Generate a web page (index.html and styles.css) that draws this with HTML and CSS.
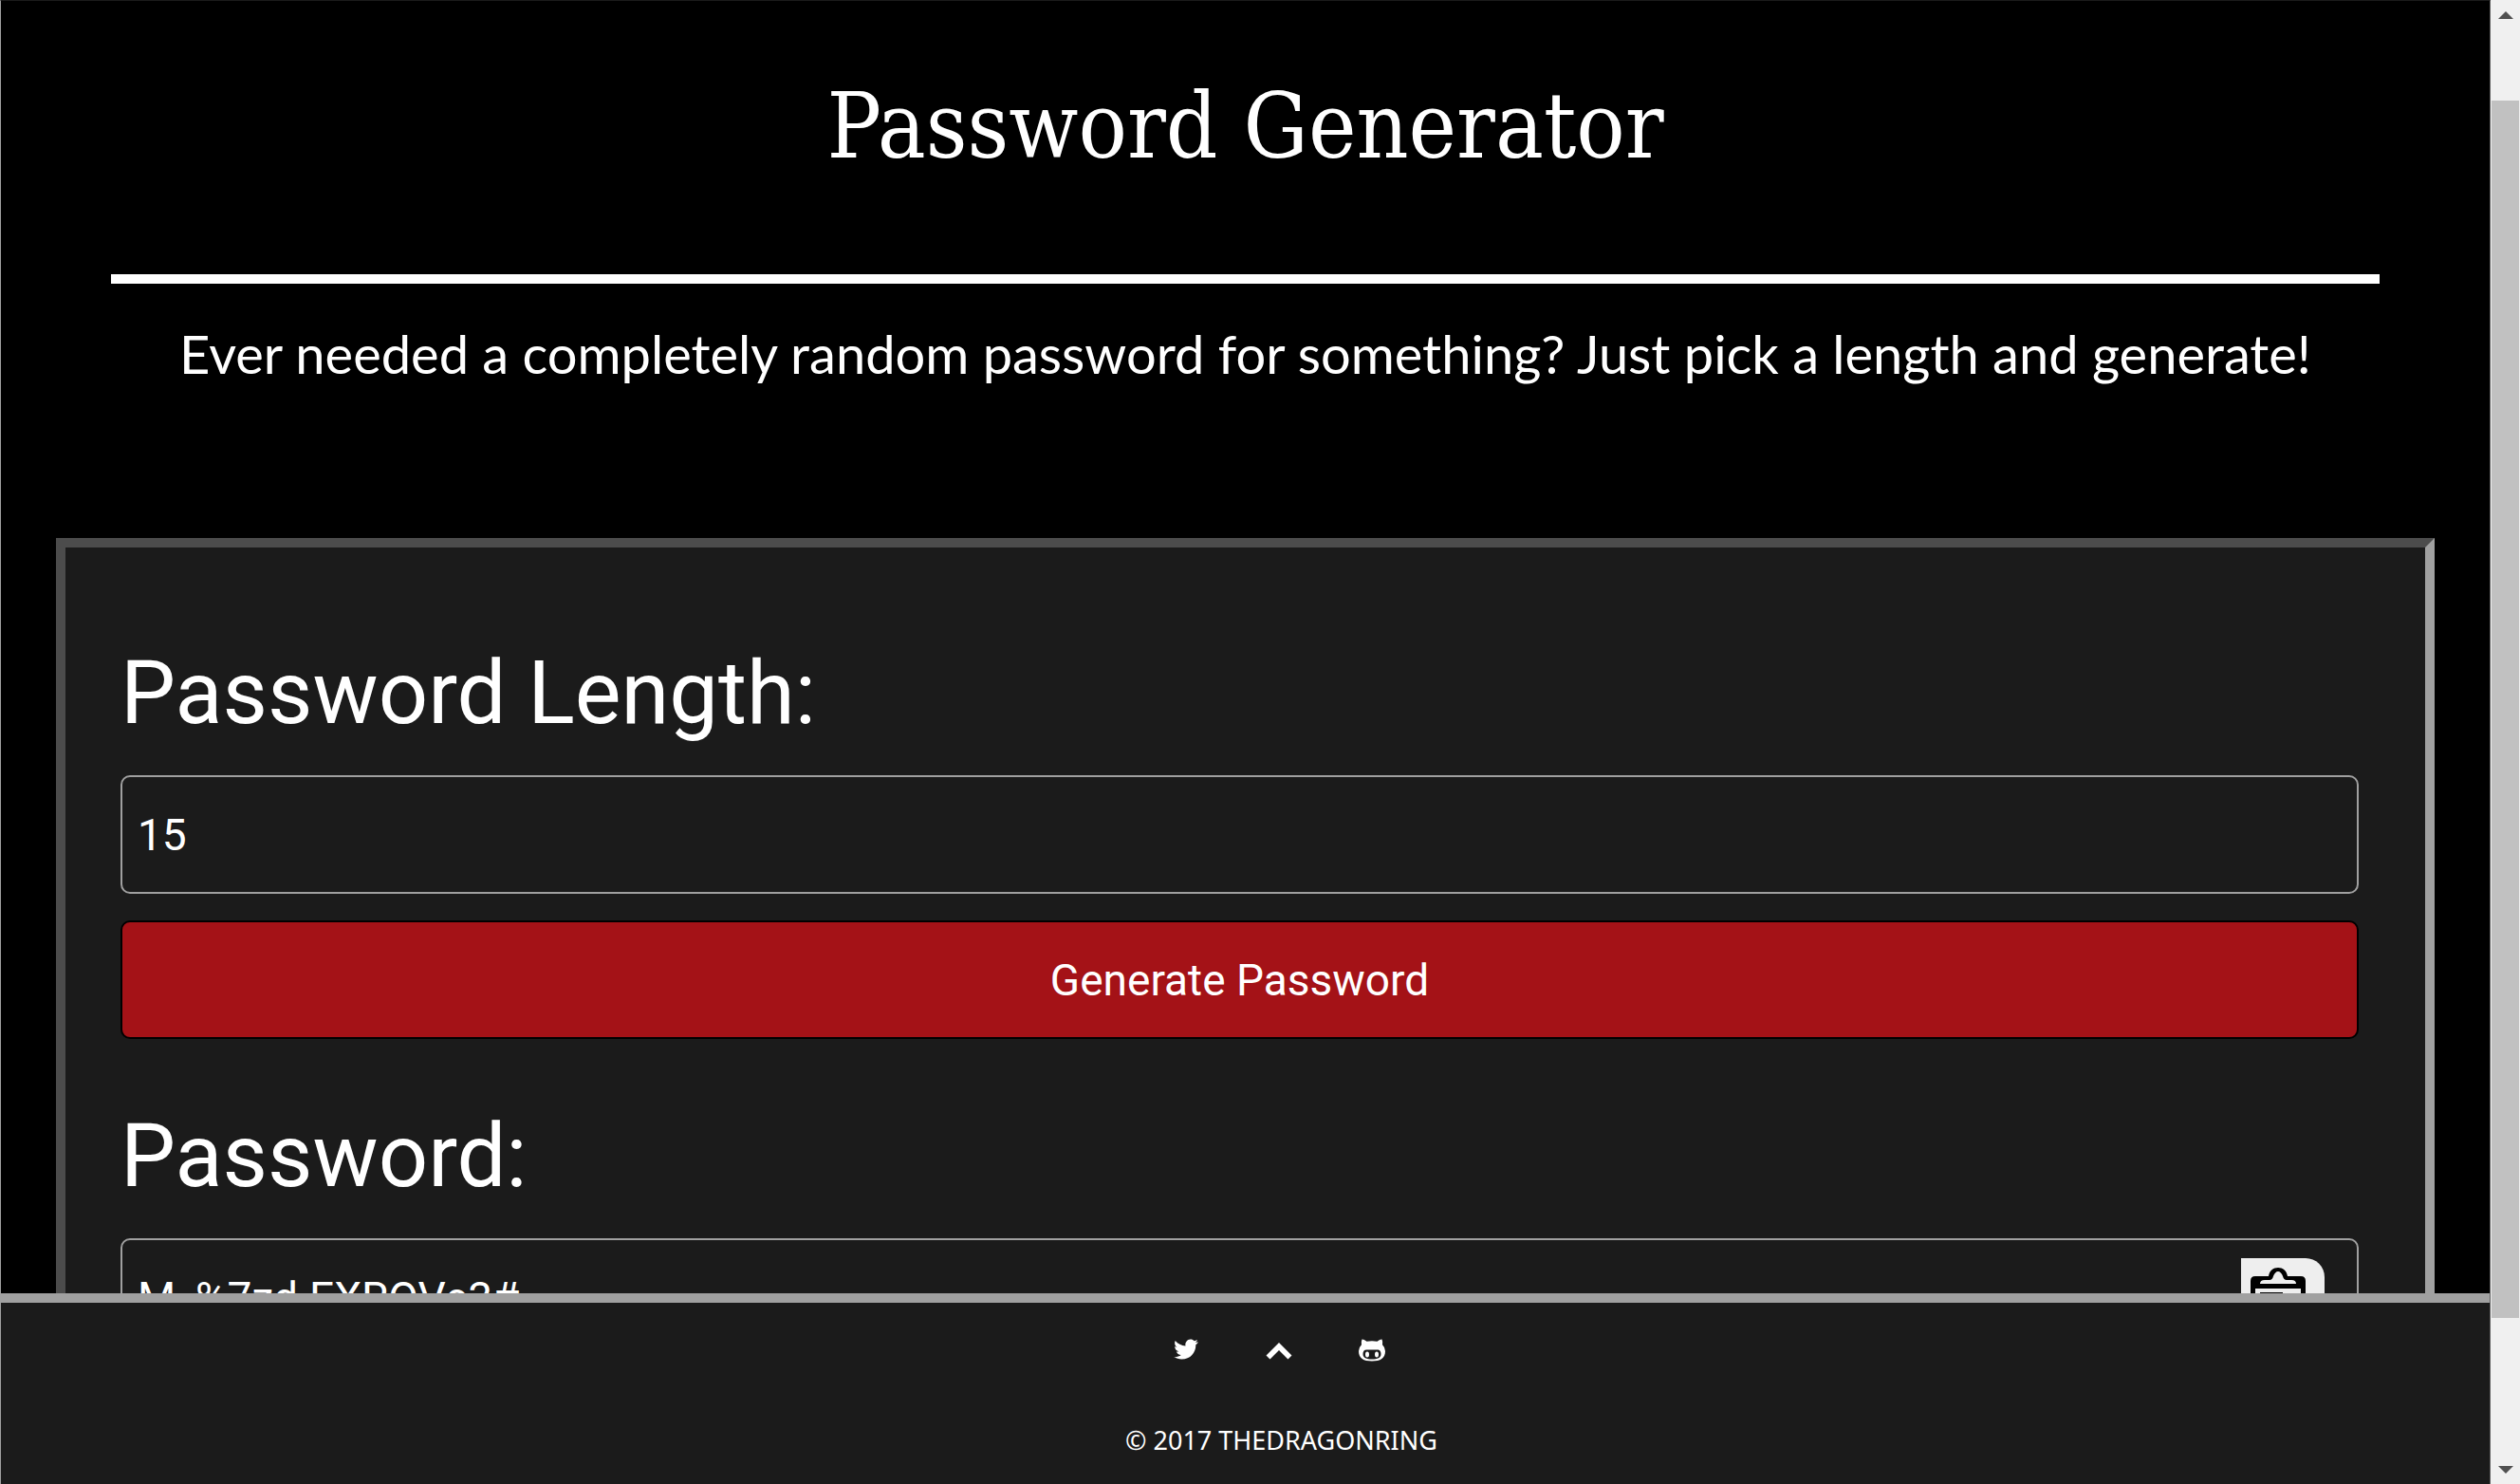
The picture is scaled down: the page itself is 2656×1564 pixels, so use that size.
FILE: index.html
```html
<!DOCTYPE html>
<html lang="en">
<head>
<meta charset="utf-8">
<title>Password Generator</title>
<link rel="stylesheet" href="styles.css">
</head>
<body>
<div class="window">
  <div class="page">
    <main class="content">
      <header class="intro">
        <h1 class="title">Password Generator</h1>
        <hr class="rule">
        <p class="tagline">Ever needed a completely random password for something? Just pick a length and generate!</p>
      </header>
      <form class="card">
        <label class="label" for="length">Password Length:</label>
        <input class="field" id="length" type="text" inputmode="numeric" value="15">
        <button class="generate" type="button">Generate Password</button>
        <label class="label" for="password">Password:</label>
        <div class="result">
          <input class="field" id="password" type="text" value="M_%7zd.EXROVe3#" readonly>
          <button class="copy" type="button" aria-label="Copy password">
            <svg class="copy-icon" viewBox="0 0 58 66" aria-hidden="true">
              <path d="M5 9H19C20 3 24 0 29 0s9 3 10 9H53q5 0 5 5V61q0 5-5 5H5q-5 0-5-5V14Q0 9 5 9Z"/>
              <path fill="#eee" d="M10 17q0-4 5-4h5q3 0 4-4c1-3 3-5 5-5s4 2 5 5q1 4 4 4h5q5 0 5 4ZM5 22H53V61H5Z"/>
              <path d="M10 26H34v4H10ZM10 35H43v4H10ZM10 44H30v4H10Z"/>
            </svg>
          </button>
        </div>
      </form>
    </main>
    <footer class="footer">
      <nav class="links" aria-label="Social">
        <a class="link" href="#twitter" aria-label="Twitter">
          <svg class="icon" viewBox="0 0 28 28" aria-hidden="true"><path d="M27 6.500q-1.100 1.600-2.700 2.700v.7c0 7.300-5.500 14.600-14.900 14.600-3 0-5.800-.9-8.100-2.400 2.700.3 5.400-.5 7.500-2.100-2.300 0-4.200-1.600-4.800-3.600.8.100 1.500.1 2.300-.1-2.400-.5-4.200-2.600-4.200-5.200.7.400 1.500.6 2.400.7C2.100 10.300 1.500 7.400 2.700 5c2.700 3.200 6.500 5.200 10.800 5.400C12.700 6.900 15.300 3.500 18.800 3.500c1.500 0 2.900.7 3.900 1.700q1.700-.3 3.300-1.300-.6 1.800-2.300 2.900 1.700-.2 3.300-.3Z"/></svg>
        </a>
        <a class="link" href="#top" aria-label="Back to top">
          <svg class="icon" viewBox="0 0 28 28" aria-hidden="true"><path d="M14 7 27.500 20.500 23.500 24.500 14 15 4.500 24.500.5 20.500Z"/></svg>
        </a>
        <a class="link" href="#github" aria-label="GitHub">
          <svg class="icon" viewBox="0 0 28 28" aria-hidden="true"><path fill-rule="evenodd" d="M3.500 3.500C5.500 3.500 7 4.500 8.500 5.800Q14 4.800 19.500 5.800C21 4.500 22.500 3.500 24.500 3.500Q25.600 6.200 25 9.200Q28 12 28 16C28 23.500 23 26.500 14 26.500S0 23.500 0 16Q0 12 3 9.200Q2.400 6.200 3.500 3.500ZM8.500 14.500C5.500 14.500 4.500 16.500 4.500 19C4.500 23 8 24.500 14 24.500S23.500 23 23.500 19C23.500 16.500 22.500 14.500 19.500 14.500Z"/><ellipse cx="9" cy="19.500" rx="2" ry="3"/><ellipse cx="19" cy="19.500" rx="2" ry="3"/></svg>
        </a>
      </nav>
      <p class="copyright">© 2017 THEDRAGONRING</p>
    </footer>
  </div>
  <div class="scrollbar" aria-hidden="true">
    <svg class="arrow" viewBox="0 0 16 8"><path d="M0 8 8 0 16 8Z"/></svg>
    <div class="track"><div class="thumb"></div></div>
    <svg class="arrow" viewBox="0 0 16 8"><path d="M0 0H16L8 8Z"/></svg>
  </div>
</div>
</body>
</html>
```

FILE: styles.css
```css
* { box-sizing: border-box; }

body {
  margin: 0;
  background: #000;
  color: #fff;
  font-family: Roboto, "Open Sans", sans-serif;
}

.window {
  display: flex;
  height: 100vh;
  overflow: hidden;
}

.page {
  flex: 1;
  min-width: 0;
  display: flex;
  flex-direction: column;
  border-top: 1px solid #1b1b1b;
  border-left: 1px solid #a0a0a0;
  border-right: 1px solid #606060;
}

.content {
  flex: 1;
  min-height: 0;
  overflow: hidden;
  padding: 0 58px;
}

.intro {
  padding: 66px 58px 0;
  text-align: center;
}

.title {
  margin: 0;
  font: 400 95px/132px "DejaVu Serif Condensed", "DejaVu Serif", serif;
}

.rule {
  height: 10px;
  margin: 90px 0 0;
  border: 0;
  background: #fff;
}

.tagline {
  margin: 36px 0 0;
  font: 400 56px/76px Lato, sans-serif;
  white-space: nowrap;
}

.card {
  display: flex;
  flex-direction: column;
  margin-top: 156px;
  padding: 90px 70px 70px 58px;
  border: 10px solid;
  border-color: #4c4c4c #a0a0a0 #a0a0a0 #4c4c4c;
  background: #1b1b1b;
}

.label {
  height: 150px;
  font-size: 92px;
  line-height: 128px;
}

.field,
.generate {
  width: 100%;
  height: 125px;
  border-radius: 10px;
  color: #fff;
  font: 400 46px/60px Roboto, sans-serif;
}

.field {
  padding: 0 16px;
  border: 2px solid #a0a0a0;
  background: transparent;
}

.generate {
  margin: 28px 0 60px;
  border: 2px solid #000;
  background: #a41217;
}

.result { position: relative; }

.copy {
  position: absolute;
  top: 21px;
  right: 36px;
  width: 88px;
  height: 84px;
  padding: 10px;
  border: 0;
  border-radius: 0 20px 20px 0;
  background: #eee;
}

.copy-icon {
  display: block;
  width: 58px;
  height: 66px;
}

.footer {
  flex: none;
  display: flex;
  flex-direction: column;
  align-items: center;
  height: 201px;
  padding: 35px 0 0 76px;
  border-top: 10px solid #a0a0a0;
  background: #1b1b1b;
}

.links {
  display: flex;
  gap: 70px;
  padding-right: 6px;
}

.icon {
  display: block;
  width: 28px;
  height: 28px;
  fill: #fff;
}

.copyright {
  margin: 62px 0 0;
  font: 400 27px/40px "Noto Sans", sans-serif;
}

.scrollbar {
  flex: none;
  display: flex;
  flex-direction: column;
  align-items: center;
  width: 31px;
  padding: 12px 1px 11px;
  background: #f0f0f0;
}

.arrow {
  width: 16px;
  height: 8px;
  fill: #505050;
}

.track {
  flex: 1;
  align-self: stretch;
  padding: 86px 0 156px;
}

.thumb {
  height: 100%;
  background: #c1c1c1;
}
```
